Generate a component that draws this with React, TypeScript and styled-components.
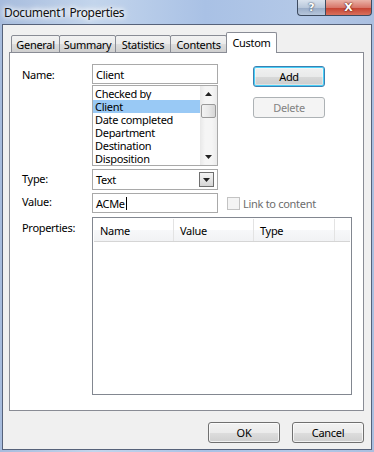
import React from "react";
import styled, { createGlobalStyle, css } from "styled-components";

const FONT = `"Noto Sans", "Open Sans", sans-serif`;

const Global = createGlobalStyle`
  html, body { margin: 0; padding: 0; background: #ffffff; }
  body { font-family: ${FONT}; }
  * { box-sizing: border-box; }
`;

const Window = styled.div`
  width: 374px;
  height: 452px;
  display: flex;
  flex-direction: column;
  padding: 0 2px 2px 2px;
  background: linear-gradient(90deg, #a7bcdd 0%, #c3d5ec 25%, #a9c1e5 55%, #b3c8e7 80%, #aabfe0 100%);
  font-family: ${FONT};
  font-size: 11px;
  letter-spacing: -0.3px;
  color: #000;
`;

const TitleBar = styled.div`
  height: 24px;
  flex: none;
  display: flex;
  align-items: flex-start;
  justify-content: space-between;
  padding-left: 2px;
`;

const Title = styled.div`
  margin-top: 4px;
  font-size: 12px;
  letter-spacing: -0.35px;
  color: #111;
  text-shadow: 0 0 8px #ffffff, 0 0 6px #ffffff, 0 0 4px #ffffff;
`;

const Caption = styled.div`
  display: flex;
  height: 16px;
`;

const CapButton = styled.div<{ $kind: "help" | "close" }>`
  height: 16px;
  display: flex;
  align-items: center;
  justify-content: center;
  border: 1px solid #3d4b60;
  border-top: none;
  font-family: "DejaVu Sans", sans-serif;
  font-weight: bold;
  color: #fff;
  letter-spacing: 0;
  ${(p) =>
    p.$kind === "help"
      ? css`
          width: 28px;
          border-right: none;
          border-bottom-left-radius: 4px;
          background: linear-gradient(180deg, #d9e2ee 0%, #b9c8db 50%, #98abc6 51%, #b6c6dc 100%);
          font-size: 11px;
          text-shadow: 0 0 2px #3d4b60, 0 0 1px #3d4b60;
        `
      : css`
          width: 47px;
          border-bottom-right-radius: 4px;
          background: linear-gradient(180deg, #eab3a8 0%, #d8776a 50%, #c4402f 51%, #d9705c 100%);
          font-size: 11px;
          text-shadow: 0 0 2px #5a1a12, 0 0 1px #5a1a12;
        `}
`;

const Client = styled.div`
  flex: 1;
  display: flex;
  flex-direction: column;
  background: #f0f0f0;
  border: 1px solid #56627a;
  padding: 7px 7px 6px 6px;
`;

const TabStrip = styled.div`
  display: flex;
  align-items: flex-end;
  height: 21px;
  padding-left: 2px;
  margin-bottom: -1px;
  position: relative;
  z-index: 1;
`;

const Tab = styled.div<{ $w: number; $active?: boolean }>`
  width: ${(p) => p.$w}px;
  margin-right: -1px;
  display: flex;
  align-items: center;
  justify-content: center;
  border: 1px solid #898c95;
  border-bottom: none;
  color: #000;
  font-size: 11px;
  ${(p) =>
    p.$active
      ? css`
          height: 21px;
          background: #ffffff;
          padding-bottom: 2px;
          border-radius: 2px 2px 0 0;
        `
      : css`
          height: 18px;
          background: linear-gradient(180deg, #f2f2f2 0%, #ebebeb 50%, #dddddd 51%, #cfcfcf 100%);
          border-bottom: 1px solid #898c95;
          padding-top: 1px;
          border-radius: 2px 2px 0 0;
        `}
`;

const Panel = styled.div`
  flex: 1;
  background: #ffffff;
  border: 1px solid #898c95;
  padding: 11px 0 0 12px;
  display: grid;
  grid-template-columns: 70px 126px auto;
  align-content: start;
`;

const Label = styled.div<{ $row: number; $mt?: number }>`
  grid-column: 1;
  grid-row: ${(p) => p.$row};
  margin-top: ${(p) => p.$mt ?? 0}px;
  font-size: 11px;
  align-self: ${(p) => (p.$mt !== undefined ? "start" : "center")};
`;

const TextBox = styled.div<{ $row: number; $mt?: number }>`
  grid-column: 2;
  grid-row: ${(p) => p.$row};
  margin-top: ${(p) => p.$mt ?? 0}px;
  height: 20px;
  border: 1px solid #a9a9a9;
  background: #fff;
  display: flex;
  align-items: center;
  padding-left: 3px;
  font-size: 11px;
`;

const Caret = styled.span`
  display: inline-block;
  width: 1px;
  height: 13px;
  background: #000;
  margin-left: 1px;
`;

const ListBox = styled.div`
  grid-column: 2;
  grid-row: 2;
  margin-top: 1px;
  height: 81px;
  border: 1px solid #a9a9a9;
  background: #fff;
  display: flex;
`;

const ListItems = styled.div`
  flex: 1;
  padding-top: 1px;
  overflow: hidden;
`;

const ListItem = styled.div<{ $selected?: boolean }>`
  height: 13px;
  line-height: 13px;
  padding-left: 2px;
  font-size: 11px;
  white-space: nowrap;
  overflow: hidden;
  background: ${(p) => (p.$selected ? "#99c9f5" : "transparent")};
`;

const ScrollBar = styled.div`
  width: 17px;
  flex: none;
  display: flex;
  flex-direction: column;
  align-items: center;
  background: linear-gradient(90deg, #e8e8e8 0%, #f5f5f5 30%, #f5f5f5 70%, #ebebeb 100%);
`;

const ArrowBox = styled.div`
  height: 16px;
  width: 17px;
  display: flex;
  align-items: center;
  justify-content: center;
`;

const Thumb = styled.div`
  width: 15px;
  height: 14px;
  margin-top: 2px;
  border: 1px solid #9a9a9a;
  border-radius: 2px;
  background: linear-gradient(90deg, #f3f3f3 0%, #e8e8e8 50%, #d6d6d6 100%);
`;

const ScrollSpacer = styled.div`
  flex: 1;
`;

const Combo = styled.div`
  grid-column: 2;
  grid-row: 3;
  margin-top: 3px;
  height: 21px;
  border: 1px solid #a9a9a9;
  background: #fff;
  display: flex;
  align-items: center;
  justify-content: space-between;
  padding: 0 3px 0 3px;
  font-size: 11px;
`;

const DropButton = styled.div`
  width: 15px;
  height: 15px;
  border: 1px solid #6f6f6f;
  background: linear-gradient(180deg, #f4f4f4 0%, #e6e6e6 50%, #d6d6d6 100%);
  display: flex;
  align-items: center;
  justify-content: center;
`;

const ButtonCol = styled.div`
  grid-column: 3;
  grid-row: 1 / span 2;
  margin-left: 35px;
  margin-top: 2px;
  display: flex;
  flex-direction: column;
  gap: 10px;
  align-self: start;
`;

const PushButton = styled.div<{ $variant?: "default" | "disabled" }>`
  width: 72px;
  height: 21px;
  border-radius: 3px;
  display: flex;
  align-items: center;
  justify-content: center;
  font-size: 11px;
  border: 1px solid #707070;
  color: #000;
  background: linear-gradient(180deg, #f2f2f2 0%, #ebebeb 50%, #dddddd 51%, #cfcfcf 100%);
  box-shadow: inset 0 0 0 1px rgba(255, 255, 255, 0.7);
  ${(p) =>
    p.$variant === "default" &&
    css`
      border-color: #3c7fb1;
      box-shadow: inset 0 0 0 1px #48d0f8, inset 0 0 0 2px rgba(255, 255, 255, 0.4);
      background: linear-gradient(180deg, #f0f1f1 0%, #e9eaea 50%, #d8d9d9 51%, #cbcccc 100%);
    `}
  ${(p) =>
    p.$variant === "disabled" &&
    css`
      border-color: #adb2b5;
      color: #838383;
      background: #f4f4f4;
      box-shadow: none;
    `}
`;

const LinkRow = styled.div`
  grid-column: 3;
  grid-row: 4;
  margin-top: 3px;
  margin-left: 9px;
  display: flex;
  align-items: center;
  gap: 3px;
  color: #6d6d6d;
  font-size: 11px;
  white-space: nowrap;
`;

const CheckBox = styled.div`
  width: 13px;
  height: 13px;
  border: 1px solid #c3c3c3;
  background: #f4f4f4;
`;

const PropList = styled.div`
  grid-column: 2 / span 2;
  grid-row: 5;
  margin-top: 4px;
  width: 260px;
  height: 178px;
  border: 1px solid #828790;
  background: #fff;
  padding: 1px 1px 0 1px;
`;

const Header = styled.div`
  display: flex;
  height: 23px;
  border-bottom: 1px solid #d5d5d5;
  background: linear-gradient(180deg, #ffffff 0%, #ffffff 50%, #f7f8fa 51%, #f1f2f4 100%);
`;

const HeaderCell = styled.div<{ $w?: number }>`
  ${(p) => (p.$w ? `width: ${p.$w}px;` : "flex: 1;")}
  display: flex;
  align-items: center;
  padding-left: 6px;
  border-right: 1px solid #e3e3e3;
  font-size: 11px;
  &:last-child {
    border-right: none;
  }
`;

const Footer = styled.div`
  margin-top: 11px;
  display: flex;
  justify-content: flex-end;
  gap: 12px;
`;

const Arrow = ({ up }: { up?: boolean }) => (
  <svg width={7} height={4} viewBox="0 0 7 4">
    {up ? <path d="M0 4 L3.5 0 L7 4 Z" fill="#222" /> : <path d="M0 0 L7 0 L3.5 4 Z" fill="#222" />}
  </svg>
);

const items = ["Checked by", "Client", "Date completed", "Department", "Destination", "Disposition"];

export default function App() {
  return (
    <>
      <Global />
      <Window>
        <TitleBar>
          <Title>Document1 Properties</Title>
          <Caption>
            <CapButton $kind="help">?</CapButton>
            <CapButton $kind="close">X</CapButton>
          </Caption>
        </TitleBar>
        <Client>
          <TabStrip>
            <Tab $w={49}>General</Tab>
            <Tab $w={57}>Summary</Tab>
            <Tab $w={56}>Statistics</Tab>
            <Tab $w={57}>Contents</Tab>
            <Tab $w={51} $active>
              Custom
            </Tab>
          </TabStrip>
          <Panel>
            <Label $row={1}>Name:</Label>
            <TextBox $row={1}>Client</TextBox>
            <ButtonCol>
              <PushButton $variant="default">Add</PushButton>
              <PushButton $variant="disabled">Delete</PushButton>
            </ButtonCol>
            <ListBox>
              <ListItems>
                {items.map((it) => (
                  <ListItem key={it} $selected={it === "Client"}>
                    {it}
                  </ListItem>
                ))}
              </ListItems>
              <ScrollBar>
                <ArrowBox>
                  <Arrow up />
                </ArrowBox>
                <Thumb />
                <ScrollSpacer />
                <ArrowBox>
                  <Arrow />
                </ArrowBox>
              </ScrollBar>
            </ListBox>
            <Label $row={3}>Type:</Label>
            <Combo>
              Text
              <DropButton>
                <Arrow />
              </DropButton>
            </Combo>
            <Label $row={4}>Value:</Label>
            <TextBox $row={4} $mt={3}>
              ACMe
              <Caret />
            </TextBox>
            <LinkRow>
              <CheckBox />
              Link to content
            </LinkRow>
            <Label $row={5} $mt={7}>
              Properties:
            </Label>
            <PropList>
              <Header>
                <HeaderCell $w={80}>Name</HeaderCell>
                <HeaderCell $w={80}>Value</HeaderCell>
                <HeaderCell $w={81}>Type</HeaderCell>
                <HeaderCell />
              </Header>
            </PropList>
          </Panel>
          <Footer>
            <PushButton>OK</PushButton>
            <PushButton>Cancel</PushButton>
          </Footer>
        </Client>
      </Window>
    </>
  );
}
